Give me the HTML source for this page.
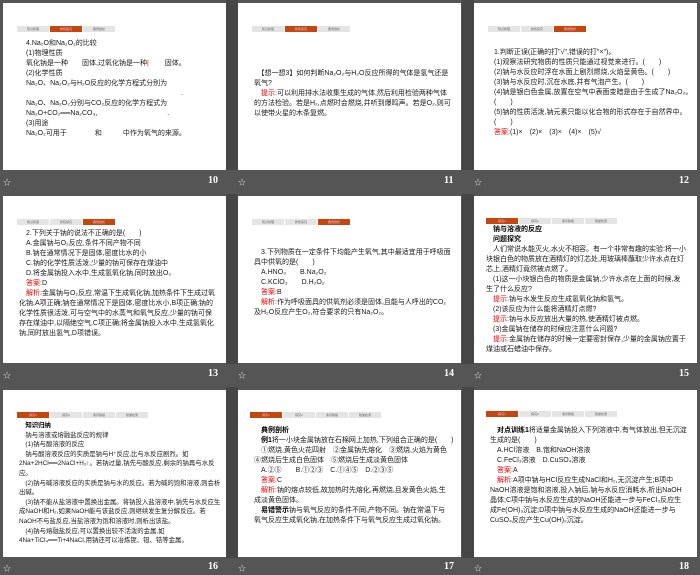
<!DOCTYPE html>
<html><head><meta charset="utf-8"><style>
*{margin:0;padding:0;box-sizing:border-box}
body{width:700px;height:575px;background:#555;position:relative;overflow:hidden;font-family:"Liberation Serif","Noto Serif CJK SC","Noto Sans CJK SC",serif}
.dk{position:absolute;background:#464646}
.s{position:absolute;width:223px;height:167px;background:#fff;overflow:hidden}
.tabs{position:absolute;left:14px;top:23px;height:6px;display:flex}
.tabs span{display:block;width:33px;height:6px;background:#e4e4e4;border-right:1px solid #fff;font-size:3px;color:#666;text-align:center;line-height:6px;font-family:"Liberation Sans","Noto Sans CJK SC",sans-serif}
.tabs span.on{background:#c4470f;color:#fbd}
.t{position:absolute;left:20px;right:10px;font-size:7px;line-height:10px;color:#1a1a1a;font-family:"Liberation Sans","Noto Sans CJK SC",sans-serif}
.t p{margin:0;white-space:nowrap}
.t p.w{white-space:normal}
.r{color:#e00}
b{color:#000}
.f{position:absolute;color:#fff;font-size:10px;font-weight:bold}
.st{position:absolute;color:#ddd;font-size:8px}
</style></head><body>
<div class="dk" style="left:226px;top:0;width:12px;height:170px"></div>
<div class="dk" style="left:226px;top:194px;width:12px;height:170px"></div>
<div class="dk" style="left:226px;top:387px;width:12px;height:171px"></div>
<div class="dk" style="left:462px;top:0;width:12px;height:170px"></div>
<div class="dk" style="left:462px;top:194px;width:12px;height:170px"></div>
<div class="dk" style="left:462px;top:387px;width:12px;height:171px"></div>

<!-- 10 -->
<div class="s" style="left:3px;top:3px">
<div class="tabs"><span>知识梳理</span><span class="on">新知探究</span><span>典例剖析</span></div>
<div class="t" style="top:36px;left:23px"><p>4.Na₂O和Na₂O₂的比较</p><p>(1)物理性质</p><p>氧化钠是一种　　固体,过氧化钠是一种<span class="r">|</span>　　 固体。</p><p>(2)化学性质</p><p>Na₂O、Na₂O₂与H₂O反应的化学方程式分别为</p><p style="padding-left:155px">.</p><p>Na₂O、Na₂O₂分别与CO₂反应的化学方程式为</p><p>Na₂O+CO₂══Na₂CO₃,　　　　　　　　　　.</p><p>(3)用途</p><p>Na₂O₂可用于　　　　和　　　中作为氧气的来源。</p></div>
</div>
<div class="st" style="left:3px;top:177px">☆</div><div class="f" style="left:208px;top:175px">10</div>

<!-- 11 -->
<div class="s" style="left:238px;top:3px">
<div class="tabs"><span>知识梳理</span><span class="on">新知探究</span><span>典例剖析</span></div>
<div class="t" style="top:66px;left:16px"><p class="w">　【想一想3】如何判断Na₂O₂与H₂O反应所得的气体是氢气还是氧气?</p><p class="w">　<span class="r">提示:</span>可以利用排水法收集生成的气体,然后利用检验两种气体的方法检验。若是H₂,点燃时会燃烧,并听到爆鸣声。若是O₂,则可以使带火星的木条复燃。</p></div>
</div>
<div class="st" style="left:238px;top:177px">☆</div><div class="f" style="left:444px;top:175px">11</div>

<!-- 12 -->
<div class="s" style="left:474px;top:3px">
<div class="tabs"><span>知识梳理</span><span>新知探究</span><span class="on">典例剖析</span></div>
<div class="t" style="top:45px;left:20px"><p>1.判断正误(正确的打"√",错误的打"×")。</p><p>(1)观察法研究物质的性质只能通过视觉来进行。(　　)</p><p>(2)钠与水反应时浮在水面上剧烈燃烧,火焰呈黄色。(　　)</p><p>(3)钠与水反应时,沉在水底,并有气泡产生。(　　)</p><p>(4)钠是银白色金属,放置在空气中表面变暗是由于生成了Na₂O₂。</p><p>(　　)</p><p>(5)钠的性质活泼,钠元素只能以化合物的形式存在于自然界中。</p><p>(　　)</p><p><span class="r">答案:</span>(1)×　(2)×　(3)×　(4)×　(5)√</p></div>
</div>
<div class="st" style="left:474px;top:177px">☆</div><div class="f" style="left:679px;top:175px">12</div>

<!-- 13 -->
<div class="s" style="left:3px;top:196px">
<div class="tabs"><span>知识梳理</span><span>新知探究</span><span class="on">典例剖析</span></div>
<div class="t" style="top:33px;left:16px"><p>　2.下列关于钠的说法不正确的是(　　)</p><p>　A.金属钠与O₂反应,条件不同产物不同</p><p>　B.钠在通常情况下是固体,密度比水的小</p><p>　C.钠的化学性质活泼,少量的钠可保存在煤油中</p><p>　D.将金属钠投入水中,生成氢氧化钠,同时放出O₂</p><p>　<span class="r">答案:</span>D</p><p class="w">　<span class="r">解析:</span>金属钠与O₂反应,常温下生成氧化钠,加热条件下生成过氧化钠,A项正确;钠在通常情况下是固体,密度比水小,B项正确;钠的化学性质很活泼,可与空气中的水蒸气和氧气反应,少量的钠可保存在煤油中,以隔绝空气,C项正确;将金属钠投入水中,生成氢氧化钠,同时放出氢气,D项错误。</p></div>
</div>
<div class="st" style="left:3px;top:370px">☆</div><div class="f" style="left:208px;top:368px">13</div>

<!-- 14 -->
<div class="s" style="left:238px;top:196px">
<div class="tabs"><span>知识梳理</span><span>新知探究</span><span class="on">典例剖析</span></div>
<div class="t" style="top:52px;left:16px"><p class="w">　3.下列物质在一定条件下均能产生氧气,其中最适宜用于呼吸面具中供氧的是(　　)</p><p>　A.HNO₃　　B.Na₂O₂</p><p>　C.KClO₃　　D.H₂O₂</p><p>　<span class="r">答案:</span>B</p><p class="w">　<span class="r">解析:</span>作为呼吸面具的供氧剂必须是固体,且能与人呼出的CO₂及H₂O反应产生O₂,符合要求的只有Na₂O₂。</p></div>
</div>
<div class="st" style="left:238px;top:370px">☆</div><div class="f" style="left:444px;top:368px">14</div>

<!-- 15 -->
<div class="s" style="left:474px;top:196px">
<div class="tabs" style="left:12px;top:22px"><span class="on">探究1</span><span>探究2</span><span>素养脉络</span><span>随堂检测</span></div>
<div class="t" style="top:29px;left:12px"><p>　<b>钠与溶液的反应</b></p><p>　<b>问题探究</b></p><p class="w">　人们常说水能灭火,水火不相容。有一个非常有趣的实验:将一小块银白色的物质放在酒精灯的灯芯处,用玻璃棒蘸取少许水点在灯芯上,酒精灯竟然被点燃了。</p><p class="w">　(1)这一小块银白色的物质是金属钠,少许水点在上面的时候,发生了什么反应?</p><p>　<span class="r">提示:</span>钠与水发生反应生成氢氧化钠和氢气。</p><p>　(2)该反应为什么能将酒精灯点燃?</p><p>　<span class="r">提示:</span>钠与水反应放出大量的热,使酒精灯被点燃。</p><p>　(3)金属钠在储存的时候应注意什么问题?</p><p class="w">　<span class="r">提示:</span>金属钠在储存的时候一定要密封保存,少量的金属钠应置于煤油或石蜡油中保存。</p></div>
</div>
<div class="st" style="left:474px;top:370px">☆</div><div class="f" style="left:679px;top:368px">15</div>

<!-- 16 -->
<div class="s" style="left:3px;top:390px">
<div class="tabs" style="top:22px"><span class="on">探究1</span><span>探究2</span><span>素养脉络</span><span>随堂检测</span></div>
<div class="t" style="top:31px;left:16px;right:5px;font-size:6.4px;line-height:9.6px"><p>　<b>知识归纳</b></p><p>　钠与溶液或熔融盐反应的规律</p><p>　(1)钠与酸溶液的反应</p><p class="w">　钠与酸溶液反应的实质是钠与H⁺反应,比与水反应剧烈。如2Na+2HCl══2NaCl+H₂↑。若钠过量,钠先与酸反应,剩余的钠再与水反应。</p><p class="w">　(2)钠与碱溶液反应的实质是钠与水的反应。若为碱的饱和溶液,则会析出碱。</p><p class="w">　(3)钠不能从盐溶液中置换出金属。将钠投入盐溶液中,钠先与水反应生成NaOH和H₂,如果NaOH能与该盐反应,则继续发生复分解反应。若NaOH不与盐反应,当盐溶液为饱和溶液时,则析出该盐。</p><p class="w">　(4)钠与熔融盐反应,可以置换出较不活泼的金属,如4Na+TiCl₄══Ti+4NaCl,用钠还可以冶炼铌、钽、锆等金属。</p></div>
</div>
<div class="st" style="left:3px;top:563px">☆</div><div class="f" style="left:208px;top:561px">16</div>

<!-- 17 -->
<div class="s" style="left:238px;top:390px">
<div class="tabs" style="left:12px;top:22px"><span class="on">探究1</span><span>探究2</span><span>素养脉络</span><span>随堂检测</span></div>
<div class="t" style="top:36px;left:16px"><p>　<b>典例剖析</b></p><p>　<b>例1</b>将一小块金属钠放在石棉网上加热,下列组合正确的是(　　)</p><p>　①燃烧,黄色火花四射　②金属钠先熔化　③燃烧,火焰为黄色</p><p>④燃烧后生成白色固体　⑤燃烧后生成淡黄色固体</p><p>　A.②⑤　　B.①②③　C.①④⑤　D.②③⑤</p><p>　<span class="r">答案:</span>C</p><p class="w">　<span class="r">解析:</span>钠的熔点较低,故加热时先熔化,再燃烧,且发黄色火焰,生成淡黄色固体。</p><p class="w">　<b>易错警示</b>钠与氧气反应的条件不同,产物不同。钠在常温下与氧气反应生成氧化钠,在加热条件下与氧气反应生成过氧化钠。</p></div>
</div>
<div class="st" style="left:238px;top:563px">☆</div><div class="f" style="left:444px;top:561px">17</div>

<!-- 18 -->
<div class="s" style="left:474px;top:390px">
<div class="tabs" style="left:12px;top:21px"><span class="on">探究1</span><span>探究2</span><span>素养脉络</span><span>随堂检测</span></div>
<div class="t" style="top:36px;left:16px"><p class="w">　<b>对点训练1</b>将适量金属钠投入下列溶液中,有气体放出,但无沉淀生成的是(　　)</p><p>　A.HCl溶液　B.饱和NaOH溶液</p><p>　C.FeCl₃溶液　D.CuSO₄溶液</p><p>　<span class="r">答案:</span>A</p><p class="w">　<span class="r">解析:</span>A项中钠与HCl反应生成NaCl和H₂,无沉淀产生;B项中NaOH溶液是饱和溶液,投入钠后,钠与水反应消耗水,析出NaOH晶体;C项中钠与水反应生成的NaOH还能进一步与FeCl₃反应生成Fe(OH)₃沉淀;D项中钠与水反应生成的NaOH还能进一步与CuSO₄反应产生Cu(OH)₂沉淀。</p></div>
</div>
<div class="st" style="left:474px;top:563px">☆</div><div class="f" style="left:679px;top:561px">18</div>
</body></html>
